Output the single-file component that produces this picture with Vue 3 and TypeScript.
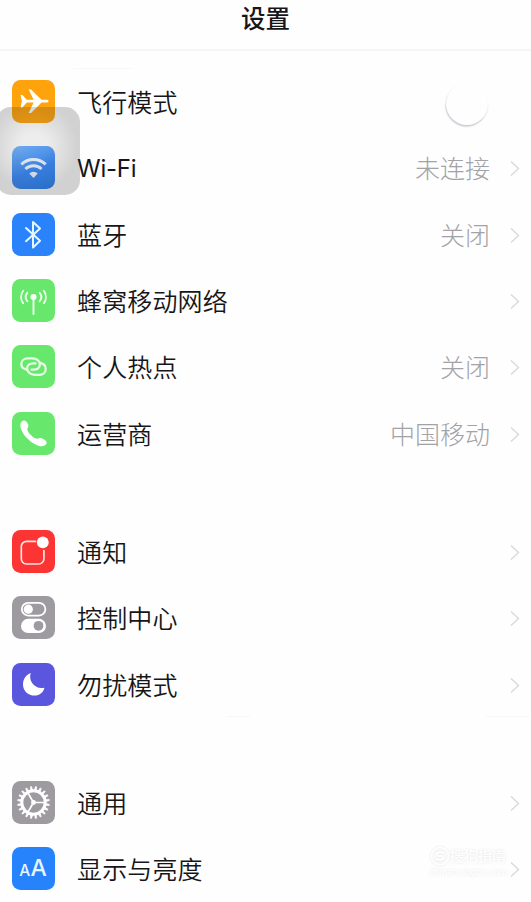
<script setup lang="ts">
interface Item {
  icon: string
  label: string
  value?: string
  toggle?: boolean
}

const groups: Item[][] = [
  [
    { icon: 'plane', label: '飞行模式', toggle: true },
    { icon: 'wifi', label: 'Wi-Fi', value: '未连接' },
    { icon: 'bluetooth', label: '蓝牙', value: '关闭' },
    { icon: 'cellular', label: '蜂窝移动网络' },
    { icon: 'hotspot', label: '个人热点', value: '关闭' },
    { icon: 'phone', label: '运营商', value: '中国移动' },
  ],
  [
    { icon: 'notify', label: '通知' },
    { icon: 'control', label: '控制中心' },
    { icon: 'moon', label: '勿扰模式' },
  ],
  [
    { icon: 'gear', label: '通用' },
    { icon: 'display', label: '显示与亮度' },
  ],
]

const teeth: number[] = Array.from({ length: 20 }, (_, i) => i * 18)
</script>

<template>
  <main class="screen">
    <header class="bar"><h1>设置</h1></header>
    <section v-for="(group, g) in groups" :key="g" class="group">
      <div v-for="item in group" :key="item.icon" class="row">
        <svg class="icon" :class="item.icon" viewBox="0 0 43 43" fill="none" stroke-linecap="round" stroke-linejoin="round">
          <path v-if="item.icon === 'plane'" fill="#fff" d="M8.500 15h1.900l4.300 4.800h6.900L16.700 9.500h2.300l10.500 10.300h4.400c1.800 0 2.700.6 2.700 1.400s-.9 1.400-2.700 1.400h-4.400L19 32.900h-2.300l4.900-10.300h-6.900l-4.300 4.800H8.500l1.300-6.200z" />
          <g v-else-if="item.icon === 'wifi'" stroke="#eef6ff" stroke-width="2.900" stroke-linecap="butt">
            <path d="M9.300 18.400a17.500 17.500 0 0 1 24.400 0M13.400 23a11.700 11.700 0 0 1 16.200 0" />
            <path d="M17.300 27.400a6.300 6.300 0 0 1 8.400 0L21.500 31.900z" fill="#eef6ff" stroke="none" />
          </g>
          <path v-else-if="item.icon === 'bluetooth'" stroke="#e6f8ff" stroke-width="2" d="M14 15 28 27.800 21 34.500V9l7 6.500L14 28.200" />
          <g v-else-if="item.icon === 'cellular'" stroke="#efffee" stroke-width="1.900">
            <circle cx="21.500" cy="18" r="3" fill="#fff" stroke="none" />
            <path d="M21.500 19v16M15.300 13.800a6.700 6.700 0 0 0 0 8.400M27.700 13.800a6.700 6.700 0 0 1 0 8.400M11.200 11.700a10.500 10.500 0 0 0 0 12.600M31.800 11.700a10.500 10.500 0 0 1 0 12.600" />
          </g>
          <g v-else-if="item.icon === 'hotspot'" stroke="#e3ffe3" stroke-width="2.300">
            <path d="M14.800 24.600c-3.300-.5-5.500-2.700-5.500-5.500 0-3.300 2.700-5.700 6.300-5.700h4.700c4.500 0 7.600 2.800 7.600 6.100 0 3.400-2.800 5.200-6.200 5.200h-2.200" />
            <path d="M28.200 17.900c3.300.7 5.500 3 5.500 6 0 3.500-2.700 5.900-6.300 5.900h-4.700c-4.500 0-7.600-2.900-7.600-6.200 0-3.400 2.800-5.200 6.200-5.200h2.200" />
          </g>
          <path v-else-if="item.icon === 'phone'" fill="#fff" d="M10.200 9c2.300-1.500 4.600.3 5.800 3.100 1.200 2.700-.7 3.600-.7 5.300 0 2.500 6 8.700 9 9.200 1.900.3 2.900-1.400 5.200-.4 3.100 1.300 6 3.200 5 5.400-1.700 3.300-6 3.200-10 1.300C17.300 29.800 11.200 23.300 9 17.100c-1.200-3.400-.9-6.700 1.200-8.100z" />
          <g v-else-if="item.icon === 'notify'">
            <path d="M23.500 11.400H14.500a5.200 5.200 0 0 0-5.200 5.200v12.200a5.200 5.200 0 0 0 5.200 5.200h12.200a5.200 5.200 0 0 0 5.200-5.200V20.500" stroke="#ffe4dc" stroke-width="1.700" />
            <circle cx="30.800" cy="12.400" r="5.900" fill="#fff" />
          </g>
          <g v-else-if="item.icon === 'control'">
            <rect x="9.800" y="6.800" width="23.600" height="12.800" rx="6.400" stroke="#fff" stroke-width="1.800" />
            <circle cx="16.300" cy="13.200" r="4.600" fill="#fff" />
            <rect x="9" y="22.800" width="25" height="14.200" rx="7.100" fill="#fff" />
            <circle cx="26.500" cy="29.800" r="4.900" fill="#9d9b9f" />
          </g>
          <path v-else-if="item.icon === 'moon'" fill="#fff" d="M18.800 10c-2.800 7.500 3.800 16.900 13.600 14.700-.8 4.500-4.600 7.800-9.800 7.800-6.500 0-11.600-4.700-11.600-11.100 0-5.300 3.300-9.900 7.800-11.400z" />
          <g v-else-if="item.icon === 'gear'" stroke="#fff">
            <circle cx="21.500" cy="21.500" r="11.700" stroke-width="3" />
            <path v-for="a in teeth" :key="a" d="M20.400 9.500 20.900 5.500h1.200l.5 4z" fill="#fff" stroke-width=".6" :transform="`rotate(${a + 9} 21.5 21.5)`" />
            <circle cx="21.500" cy="21.500" r="2.400" fill="#fff" stroke="none" />
            <path d="M21.500 21.500H33M21.500 21.500 15.700 11.500M21.500 21.500 15.700 31.500" stroke-width="1.700" />
          </g>
          <g v-else class="letters">
            <text x="7.300" y="29.300" font-size="15.500">A</text>
            <text x="18.600" y="29.300" font-size="23">A</text>
          </g>
        </svg>
        <span class="label" :class="{ latin: item.icon === 'wifi' }">{{ item.label }}</span>
        <span v-if="item.toggle" class="knob"></span>
        <template v-else>
          <span v-if="item.value" class="value">{{ item.value }}</span>
          <svg class="chevron" viewBox="0 0 10 16" fill="none"><path d="M1 1l7.500 7L1 15" stroke="#d9d9de" stroke-width="1.400" /></svg>
        </template>
      </div>
    </section>
    <div class="assist"></div>
    <div class="mark">
      <svg viewBox="0 0 20 20" fill="none"><circle cx="10" cy="10" r="8.500" stroke="#fff" stroke-width="1.500" /><path d="M13.500 6.500H8.800a1.700 1.700 0 0 0 0 3.500h2.400a1.700 1.700 0 0 1 0 3.500H6.500" stroke="#fff" stroke-width="1.800" /></svg>
      <span class="brand">搜狗指南</span>
      <span class="site">zhinan.sogou.com</span>
    </div>
  </main>
</template>

<style>
body {
  background: #fefefe;
  overflow: hidden;
}
</style>

<style scoped>
.screen {
  position: relative;
  width: 531px;
  height: 902px;
  overflow: hidden;
  background: #fefefe;
  color: #161618;
  font-family: "Noto Sans CJK SC", sans-serif;
}
.bar {
  height: 49px;
  margin-bottom: 17.400px;
  border-bottom: 2px solid #f5f5f7;
}
h1 {
  margin: 0;
  text-align: center;
  font-size: 24.500px;
  line-height: 35px;
  font-weight: 500;
}
.group {
  margin-bottom: 51.700px;
}
.group:nth-of-type(1) {
  background: linear-gradient(90deg, transparent, #f6f6f7 15%, #f6f6f7 85%, transparent) 70px 0 / 66px 1px no-repeat;
}
.group:nth-of-type(2) {
  background:
    linear-gradient(#f7f7f8, #f7f7f8) 227px 100% / 23px 1px no-repeat,
    linear-gradient(#f7f7f8, #f7f7f8) 486px 100% / 44px 1px no-repeat;
}
.row {
  display: flex;
  align-items: center;
  height: 66.350px;
  padding: 0 11px 0 11.500px;
}
.icon {
  width: 43px;
  height: 43px;
  border-radius: 8.500px;
  margin-right: 22.500px;
  flex: none;
}
.plane { background: #fea30c; }
.wifi { background: linear-gradient(160deg, #78b8ff, #3989f8 55%, #267fee); }
.bluetooth { background: #2a83fb; }
.cellular, .hotspot, .phone { background: #68e76d; }
.notify { background: #fc3534; }
.control, .gear { background: #9d9b9f; }
.moon { background: #5a56de; }
.display { background: #2783fc; }
.letters {
  fill: #e6f7ff;
  font-family: Inter, sans-serif;
  font-weight: 500;
}
.label {
  position: relative;
  z-index: 2;
  flex: 1;
  padding-bottom: 1px;
  font-size: 25px;
  font-weight: 350;
  line-height: 36px;
  letter-spacing: .15px;
}
.latin {
  padding: 3px 0 0;
  font-family: Inter, "Noto Sans CJK SC", sans-serif;
  font-size: 24px;
  font-weight: 400;
  letter-spacing: -.25px;
}
.value {
  padding-bottom: 1px;
  font-size: 25px;
  font-weight: 300;
  line-height: 36px;
  color: #a2a2a7;
}
.chevron {
  width: 10px;
  height: 17px;
  margin: 2px 0 0 20px;
}
.knob {
  width: 42px;
  height: 42px;
  margin: 4px 32px 0 0;
  border-radius: 50%;
  background: #fefefe;
  box-shadow: -.5px 1.500px 1.500px rgba(80, 80, 110, .32);
}
.assist {
  position: absolute;
  left: -4px;
  top: 107px;
  width: 84px;
  height: 88px;
  border-radius: 15px;
  background: radial-gradient(circle at 45% 45%, rgba(60, 60, 60, .09) 20%, rgba(50, 50, 55, .22) 66%);
}
.mark {
  position: absolute;
  left: 430px;
  top: 845px;
  width: 78px;
  display: grid;
  grid-template-columns: 20px 1fr;
  align-items: center;
  color: #fff;
  filter: drop-shadow(0 0 1.500px rgba(0, 0, 0, .11));
}
.mark svg {
  width: 20px;
  height: 20px;
}
.brand {
  font-size: 14px;
  line-height: 21px;
  white-space: nowrap;
}
.site {
  grid-column: 1 / 3;
  font: 8.500px/12px "DejaVu Sans", sans-serif;
  white-space: nowrap;
}
</style>
